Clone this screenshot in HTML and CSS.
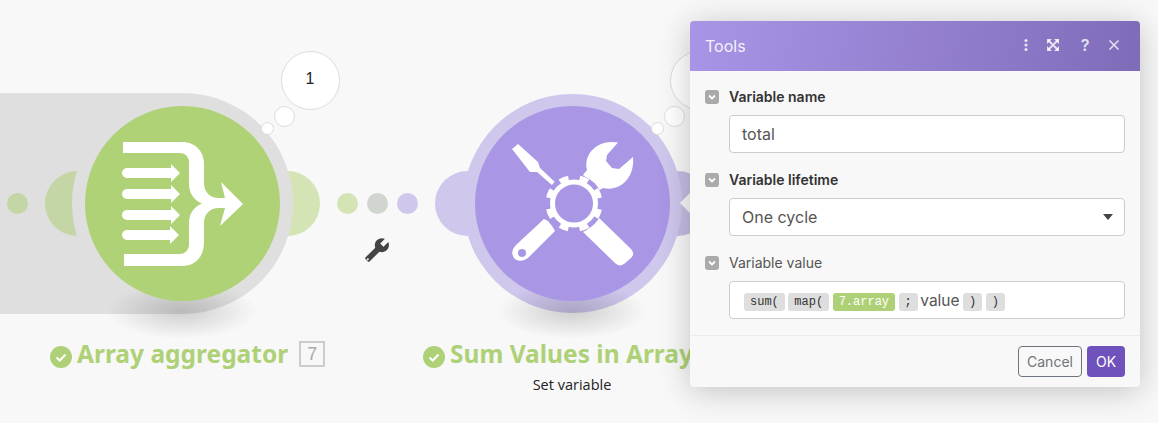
FILE: index.html
```html
<!DOCTYPE html>
<html lang="en">
<head>
  <meta charset="UTF-8">
  <title>Tools</title>
  <link rel="stylesheet" href="styles.css">
</head>
<body>
  <div class="canvas">
    <div class="band"></div>

    <span class="dot dot-a"></span>
    <span class="dot dot-b"></span>
    <span class="dot dot-c"></span>
    <span class="dot dot-d"></span>

    <!-- aggregator node -->
    <span class="lobe lobe-a"></span>
    <span class="lobe lobe-b"></span>
    <div class="ring ring-gray"></div>
    <div class="drop drop-a"></div>
    <div class="disc disc-green">
      <svg class="disc-icon" viewBox="0 0 160 160" width="160" height="160">
        <path fill="#fff" d="M23 22H82C96 22 104 32 104 44V63C104 72 110 78 119 78H125L121 62L143 84L120 106L125 88H119C110 88 104 94 104 103V122C104 136 96 146 82 146H24V134H80C85 134 89 130 89 124V103C89 93 95 86 102 83.5C95 81 89 74 89 64V42C89 37 85 33 80 33H23Z"/>
        <path fill="#fff" d="M27 48H71V44L80 53L71 62V58H27A5 5 0 0 1 27 48Z"/>
        <path fill="#fff" d="M27 69H71V65L80 74L71 83V79H27A5 5 0 0 1 27 69Z"/>
        <path fill="#fff" d="M27 90H71V86L80 95L71 104V100H27A5 5 0 0 1 27 90Z"/>
        <path fill="#fff" d="M27 110H70V106L79 115L70 124V120H27A5 5 0 0 1 27 110Z"/>
      </svg>
    </div>

    <!-- tools node -->
    <span class="lobe lobe-c"></span>
    <span class="lobe lobe-d"></span>
    <div class="ring ring-purple"></div>
    <div class="drop drop-b"></div>
    <div class="disc disc-purple">
      <svg class="disc-icon" viewBox="0 0 160 160" width="160" height="160">
        <path fill="#fff" d="M22 29L28 24L48 42L50 48L66 63L63 66L47 52L40 52Z"/>
        <path fill="#fff" d="M128 22.6C108 19 93 34 97 50L93 55L108 71L113 68C130 72 145 58 143 37L129 49L122 48L116 41L117 35Z"/>
        <path fill="#fff" fill-rule="evenodd" d="M54 99L58 101L62 106L65 111L40 136C34 142 27 142 24 138C21 134 22 129 26 125ZM32 129A4 4 0 1 0 32 137A4 4 0 1 0 32 129Z"/>
        <path fill="#fff" d="M107 96L140 128C144 132 144 135 141 138L134 144C131 146 128 146 125 143L93 112L97 110L99 104L105 102Z"/>
        <circle cx="84" cy="83.5" r="29" fill="#a997e6"/>
        <circle cx="84" cy="83.5" r="21.5" fill="none" stroke="#fff" stroke-width="5"/>
        <circle cx="84" cy="83.5" r="25.5" fill="none" stroke="#fff" stroke-width="6" pathLength="80" stroke-dasharray="4.500 5.500" stroke-dashoffset="2.250" transform="rotate(-67.5 84 83.5)"/>
      </svg>
    </div>

    <!-- route filter wrench -->
    <svg class="mini-wrench" viewBox="0 0 24 24" width="26" height="26">
      <path fill="#444" transform="translate(24 0) scale(-1 1)" d="M22.7 19l-9.1-9.1c.9-2.300.4-5-1.500-6.900-2-2-5-2.400-7.400-1.300L9 6 6 9 1.600 4.700C.4 7.100.9 10.100 2.900 12.100c1.900 1.900 4.600 2.400 6.900 1.500l9.100 9.100c.4.4 1 .4 1.400 0l2.300-2.300c.5-.4.5-1.100.1-1.400z"/>
      <circle cx="3.500" cy="20.500" r="1" fill="#f8f8f8"/>
    </svg>

    <!-- thought bubbles -->
    <span class="bubble bubble-lg bubble-lg-a">1</span>
    <span class="bubble bubble-md bubble-md-a"></span>
    <span class="bubble bubble-sm bubble-sm-a"></span>
    <span class="bubble bubble-lg bubble-lg-b"></span>
    <span class="bubble bubble-md bubble-md-b"></span>
    <span class="bubble bubble-sm bubble-sm-b"></span>

    <!-- node titles -->
    <div class="title title-a">
      <svg class="check" viewBox="0 0 22 22" width="22" height="22">
        <circle cx="11" cy="11" r="11" fill="#aed177"/>
        <path d="M6.500 11.500L9.800 14.500L15.500 8.500" fill="none" stroke="#fff" stroke-width="2"/>
      </svg>
      <span class="title-text">Array aggregator</span>
      <span class="module-id">7</span>
    </div>
    <div class="title title-b">
      <svg class="check" viewBox="0 0 22 22" width="22" height="22">
        <circle cx="11" cy="11" r="11" fill="#aed177"/>
        <path d="M6.500 11.500L9.800 14.500L15.500 8.500" fill="none" stroke="#fff" stroke-width="2"/>
      </svg>
      <span class="title-text">Sum Values in Array</span>
    </div>
    <div class="subtitle">Set variable</div>

    <!-- settings dialog -->
    <span class="modal-arrow"></span>
    <div class="modal">
      <header class="modal-head">
        <h2>Tools</h2>
        <div class="head-icons">
          <svg viewBox="0 0 16 16" width="16" height="16"><circle cx="8" cy="3.500" r="1.600"/><circle cx="8" cy="8" r="1.600"/><circle cx="8" cy="12.500" r="1.600"/></svg>
          <svg viewBox="0 0 16 16" width="16" height="16"><path d="M2 2H7L2 7ZM14 2H9L14 7ZM2 14H7L2 9ZM14 14H9L14 9Z"/><path d="M3 3L13 13M13 3L3 13" fill="none" stroke="currentColor" stroke-width="1.800"/></svg>
          <span class="head-help">?</span>
          <svg viewBox="0 0 16 16" width="16" height="16"><path d="M3.500 3.500L12.500 12.500M12.500 3.500L3.500 12.500" fill="none" stroke="currentColor" stroke-width="1.500"/></svg>
        </div>
      </header>

      <div class="modal-body">
        <section class="field">
          <div class="field-label">
            <span class="toggle"><svg viewBox="0 0 14 14" width="14" height="14"><path d="M4 5.500L7 8.500L10 5.500" fill="none" stroke="#fff" stroke-width="1.800"/></svg></span>
            <strong>Variable name</strong>
          </div>
          <div class="input">total</div>
        </section>
        <section class="field">
          <div class="field-label">
            <span class="toggle"><svg viewBox="0 0 14 14" width="14" height="14"><path d="M4 5.500L7 8.500L10 5.500" fill="none" stroke="#fff" stroke-width="1.800"/></svg></span>
            <strong>Variable lifetime</strong>
          </div>
          <div class="input input-select">One cycle<span class="caret"></span></div>
        </section>
        <section class="field">
          <div class="field-label">
            <span class="toggle"><svg viewBox="0 0 14 14" width="14" height="14"><path d="M4 5.500L7 8.500L10 5.500" fill="none" stroke="#fff" stroke-width="1.800"/></svg></span>
            <span class="field-text">Variable value</span>
          </div>
          <div class="input input-formula">
            <span class="pill">sum(</span>
            <span class="pill">map(</span>
            <span class="pill pill-green">7.array</span>
            <span class="pill">;</span>
            <span class="plain">value</span>
            <span class="pill">)</span>
            <span class="pill">)</span>
          </div>
        </section>
      </div>

      <footer class="modal-foot">
        <button class="btn btn-cancel">Cancel</button>
        <button class="btn btn-ok">OK</button>
      </footer>
    </div>
  </div>
</body>
</html>
```

FILE: styles.css
```css
html, body {
  margin: 0;
  padding: 0;
}

body {
  background-color: #f8f8f8;
  font-family: 'Inter', sans-serif;
  overflow: hidden;
}

.canvas {
  position: relative;
  width: 1158px;
  height: 423px;
  overflow: hidden;
}

.band {
  position: absolute;
  left: 0;
  top: 93px;
  width: 182px;
  height: 221px;
  background-color: #dfdfdf;
}

.dot {
  position: absolute;
  top: 193px;
  width: 21px;
  height: 21px;
  border-radius: 50%;
}

.dot-a { left: 7px; background-color: #c5d6a6; }
.dot-b { left: 337px; background-color: #d5e4b5; }
.dot-c { left: 367px; background-color: #d0d5d0; }
.dot-d { left: 397px; background-color: #cfc7ec; }

.lobe {
  position: absolute;
  top: 171px;
  width: 65px;
  height: 65px;
  border-radius: 50%;
}

.lobe-a { left: 45px; background-color: #c5d6a6; }
.lobe-b { left: 255px; background-color: #d5e4b5; }
.lobe-c { left: 435px; background-color: #cfc7ec; }
.lobe-d { left: 645px; background-color: #c6bce2; }

.ring {
  position: absolute;
  border-radius: 50%;
}

.ring-gray {
  left: 72px;
  top: 93px;
  width: 221px;
  height: 221px;
  background-color: #dfdfdf;
}

.ring-purple {
  left: 463px;
  top: 94px;
  width: 219px;
  height: 219px;
  background-color: #cfc7ec;
}

.drop {
  position: absolute;
  top: 283px;
  width: 150px;
  height: 56px;
  background: radial-gradient(closest-side, rgba(0, 0, 0, 0.17), rgba(0, 0, 0, 0));
}

.drop-a { left: 107px; }
.drop-b { left: 497px; }

.disc {
  position: absolute;
  top: 106px;
  width: 195px;
  height: 195px;
  border-radius: 50%;
}

.disc-green { left: 85px; background-color: #b0d276; }
.disc-purple { left: 475px; background-color: #a997e6; }

.disc-icon {
  position: absolute;
  left: 15px;
  top: 14px;
}

.mini-wrench {
  position: absolute;
  left: 364px;
  top: 237px;
}

.bubble {
  position: absolute;
  box-sizing: border-box;
  background-color: #fff;
  border: 1px solid #dcdcdc;
  border-radius: 50%;
}

.bubble-lg {
  top: 51px;
  width: 59px;
  height: 59px;
  padding-bottom: 3px;
  display: flex;
  align-items: center;
  justify-content: center;
  font-family: 'Liberation Sans', sans-serif;
  font-size: 16px;
  color: #222;
}

.bubble-md {
  top: 106px;
  width: 21px;
  height: 21px;
}

.bubble-sm {
  top: 122px;
  width: 13px;
  height: 13px;
}

.bubble-lg-a { left: 280.500px; }
.bubble-md-a { left: 274px; }
.bubble-sm-a { left: 261px; }
.bubble-lg-b { left: 670px; }
.bubble-md-b { left: 664px; }
.bubble-sm-b { left: 651px; }

.title {
  position: absolute;
  top: 336px;
  display: flex;
  align-items: center;
  white-space: nowrap;
  color: #aed177;
}

.title-a { left: 50px; }
.title-b { left: 423px; }

.title .check {
  margin-top: 5px;
  margin-right: 5px;
}

.title-text {
  font-family: 'Noto Sans', sans-serif;
  font-size: 24.500px;
  font-weight: 700;
  line-height: 36px;
}

.module-id {
  box-sizing: border-box;
  width: 26px;
  height: 26px;
  margin-left: 11px;
  border: 2px solid #ccc;
  font-family: 'Liberation Sans', sans-serif;
  font-size: 18px;
  line-height: 22px;
  text-align: center;
  color: #aaa;
}

.subtitle {
  position: absolute;
  left: 472px;
  top: 375px;
  width: 200px;
  font-family: 'Open Sans', sans-serif;
  font-size: 14.500px;
  line-height: 20px;
  text-align: center;
  color: #222;
}

.modal-arrow {
  position: absolute;
  left: 680px;
  top: 193px;
  width: 0;
  height: 0;
  border-top: 10px solid transparent;
  border-bottom: 10px solid transparent;
  border-right: 10px solid #f8f8f8;
}

.modal {
  position: absolute;
  left: 690px;
  top: 21px;
  width: 450px;
  height: 366px;
  background-color: #f8f8f8;
  border-radius: 4px;
  box-shadow: 0 4px 32px rgba(0, 0, 0, 0.22);
  display: flex;
  flex-direction: column;
  overflow: hidden;
}

.modal-head {
  height: 50px;
  padding: 0 18px 0 15px;
  display: flex;
  align-items: center;
  justify-content: space-between;
  background: linear-gradient(100deg, #a995e6, #7f6cb9);
  color: rgba(255, 255, 255, 0.8);
}

.modal-head h2 {
  margin: 0;
  font-size: 16px;
  font-weight: 400;
  color: rgba(255, 255, 255, 0.9);
}

.head-icons {
  display: flex;
  align-items: center;
  gap: 13px;
  fill: currentColor;
  margin-top: -2px;
}

.head-icons svg:first-child {
  margin-right: -2px;
}

.head-help {
  width: 16px;
  margin-left: 3px;
  font-size: 16px;
  font-weight: 600;
  text-align: center;
}

.modal-body {
  flex: 1;
  padding: 16px 15px;
  display: flex;
  flex-direction: column;
  gap: 17px;
}

.field-label {
  display: flex;
  align-items: center;
  gap: 10px;
  height: 20px;
  margin-bottom: 8px;
  font-size: 14px;
  color: #555;
}

.field-label strong {
  font-weight: 600;
  color: #333;
  margin-top: -1px;
}

.field-text {
  margin-top: -1px;
}

.toggle {
  width: 14px;
  height: 14px;
  background-color: #aaa;
  border-radius: 3px;
  display: flex;
}

.input {
  box-sizing: border-box;
  height: 38px;
  margin-left: 24px;
  padding: 0 12px;
  background-color: #fff;
  border: 1px solid #ccc;
  border-radius: 4px;
  display: flex;
  align-items: center;
  font-size: 16px;
  color: #555;
}

.input-select {
  justify-content: space-between;
}

.caret {
  margin-right: -1px;
  border-left: 5.500px solid transparent;
  border-right: 5.500px solid transparent;
  border-top: 6px solid #444;
}

.input-formula {
  padding-left: 14px;
  gap: 3.500px;
}

.pill {
  height: 18px;
  margin-top: 4px;
  padding: 0 6px;
  background-color: #dedede;
  border-radius: 3px;
  font-family: 'Liberation Mono', monospace;
  font-size: 12px;
  line-height: 18px;
  color: #333;
}

.pill-green {
  background-color: #aed177;
  color: #fff;
}

.plain {
  margin-left: -1px;
  font-size: 15.500px;
}

.modal-foot {
  height: 51px;
  padding-right: 15px;
  border-top: 1px solid #ececec;
  display: flex;
  align-items: center;
  justify-content: flex-end;
  gap: 5px;
}

.btn {
  height: 31px;
  padding: 0;
  border-radius: 4px;
  font-family: 'Inter', sans-serif;
  font-size: 14px;
}

.btn-cancel {
  width: 64px;
  background-color: transparent;
  border: 1px solid #6c757d;
  color: #6c757d;
}

.btn-ok {
  width: 38px;
  background-color: #6f52bb;
  border: none;
  color: #fff;
}
```
